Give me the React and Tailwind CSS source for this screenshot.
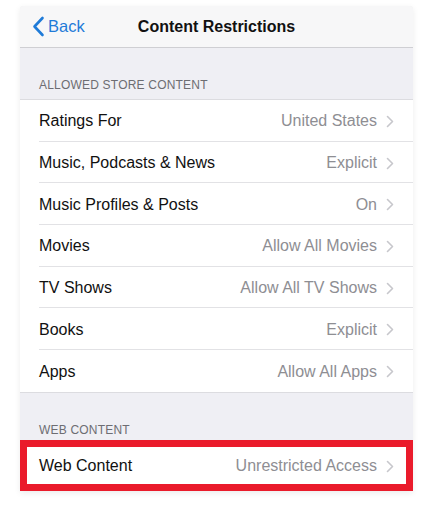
import React from "react";

const rows = [
  ["Ratings For", "United States"],
  ["Music, Podcasts & News", "Explicit"],
  ["Music Profiles & Posts", "On"],
  ["Movies", "Allow All Movies"],
  ["TV Shows", "Allow All TV Shows"],
  ["Books", "Explicit"],
  ["Apps", "Allow All Apps"],
];

function Chevron() {
  return (
    <svg width="8" height="13" viewBox="0 0 8 13" className="ml-[9px] shrink-0">
      <path d="M1.5 1.5 L6.5 6.5 L1.5 11.5" fill="none" stroke="#c7c7cc" strokeWidth="1.6" strokeLinecap="round" strokeLinejoin="round" />
    </svg>
  );
}

function Row({ label, value, last }) {
  return (
    <div className="flex h-[41.7px] pl-[19px] bg-white">
      <div className={`flex flex-1 items-center pr-[19px] pt-[2px] ${last ? "" : "border-b border-[#e2e2e5]"}`}>
        <span className="flex-1 text-[16px] text-[#111]">{label}</span>
        <span className="text-[16px] text-[#8e8e93]">{value}</span>
        <Chevron />
      </div>
    </div>
  );
}

export default function App() {
  return (
    <div className="min-h-[506px] bg-white pt-[6px] pl-[20px]" style={{ fontFamily: '"Liberation Sans", Arial, sans-serif' }}>
      <div className="w-[393px] rounded-t-[3px] shadow-[0_2px_6px_rgba(0,0,0,0.08)] bg-[#efeff4]">
        <div className="relative flex h-[42px] items-center justify-center bg-[#f7f7f8] border-b border-[#cfcfd3] rounded-t-[3px]">
          <div className="absolute left-[12px] top-0 bottom-0 flex items-center">
            <svg width="13" height="21" viewBox="0 0 13 21">
              <path d="M10.5 2 L2.5 10.5 L10.5 19" fill="none" stroke="#1f7bd8" strokeWidth="2.6" strokeLinecap="round" strokeLinejoin="round" />
            </svg>
            <span className="ml-[3px] text-[16.5px] text-[#1f7bd8]">Back</span>
          </div>
          <span className="text-[16px] font-bold text-[#111]">Content Restrictions</span>
        </div>
        <div className="h-[52px] flex items-end pl-[19px] pb-[6px] border-b border-[#dcdce0]">
          <span className="text-[12px] leading-[16px] text-[#6d6d72] tracking-[0.2px]">ALLOWED STORE CONTENT</span>
        </div>
        {rows.map(([l, v], i) => (
          <Row key={l} label={l} value={v} last={i === rows.length - 1} />
        ))}
        <div className="h-[48px] flex items-end pl-[19px] pb-[2px] border-t border-[#dcdce0]">
          <span className="text-[12px] leading-[16px] text-[#6d6d72] tracking-[0.2px]">WEB CONTENT</span>
        </div>
        <div className="h-[51px] border-[7px] border-[#ea1b2b] bg-white flex items-center pl-[12px] pr-[12px] pt-[2px]">
          <span className="flex-1 text-[16px] text-[#111]">Web Content</span>
          <span className="text-[16px] text-[#8e8e93]">Unrestricted Access</span>
          <Chevron />
        </div>
      </div>
    </div>
  );
}
